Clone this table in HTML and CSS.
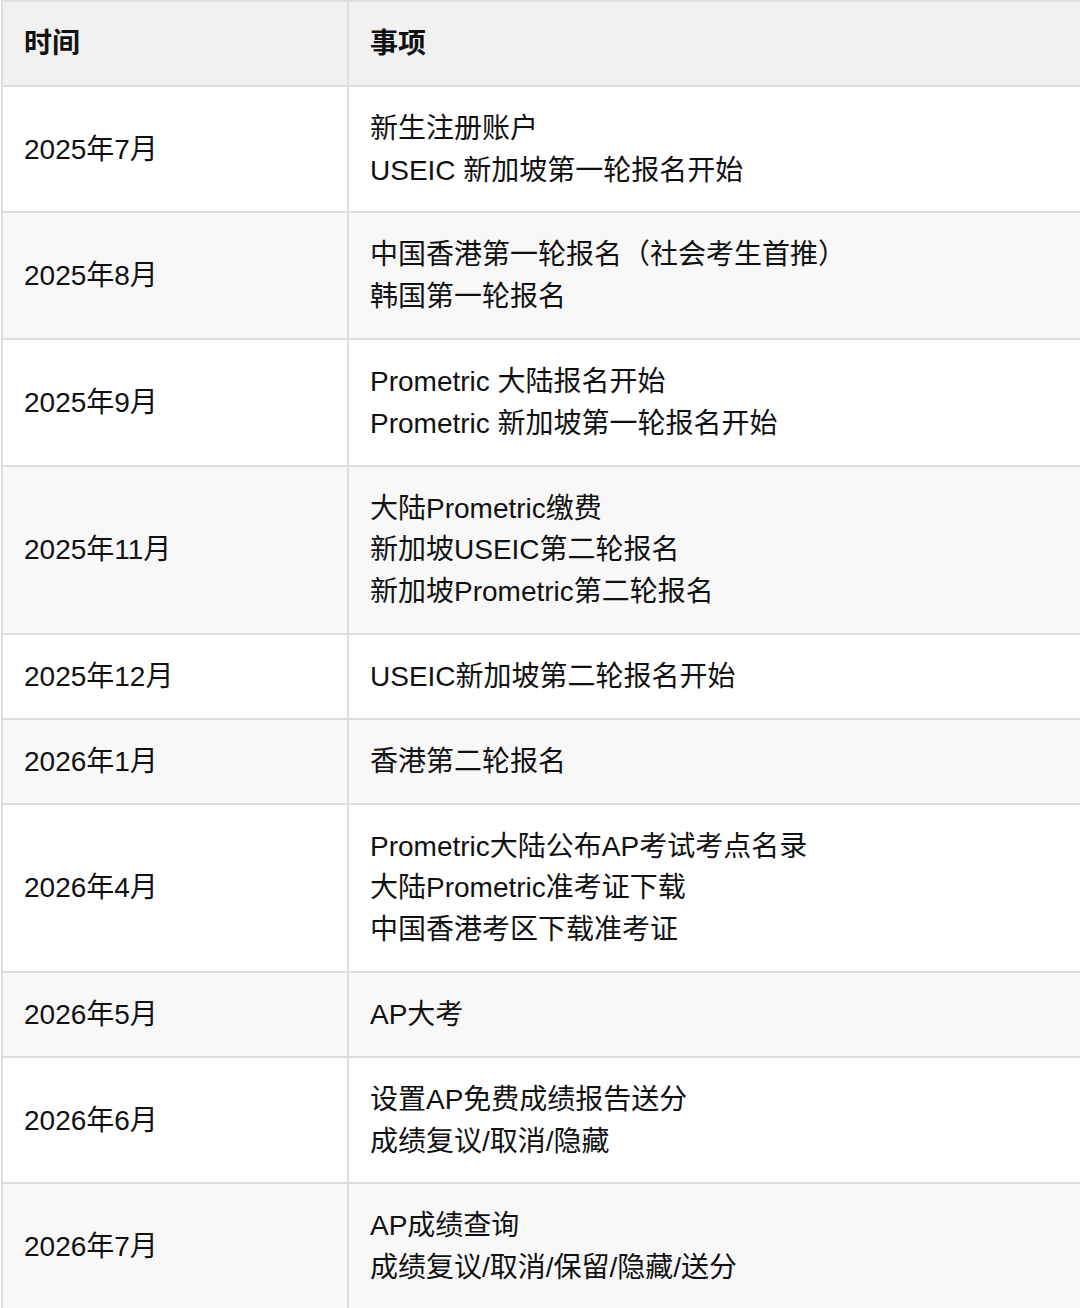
FILE: index.html
```html
<!DOCTYPE html>
<html lang="zh-CN">
<head>
<meta charset="utf-8">
<title>AP 时间表</title>
<link rel="stylesheet" href="styles.css">
</head>
<body>
<table class="schedule">
  <colgroup>
    <col class="col-time">
    <col class="col-item">
  </colgroup>
  <thead>
    <tr><th>时间</th><th>事项</th></tr>
  </thead>
  <tbody>
    <tr><td>2025年7月</td><td>新生注册账户<br>USEIC 新加坡第一轮报名开始</td></tr>
    <tr><td>2025年8月</td><td>中国香港第一轮报名（社会考生首推）<br>韩国第一轮报名</td></tr>
    <tr><td>2025年9月</td><td>Prometric 大陆报名开始<br>Prometric 新加坡第一轮报名开始</td></tr>
    <tr><td>2025年11月</td><td>大陆Prometric缴费<br>新加坡USEIC第二轮报名<br>新加坡Prometric第二轮报名</td></tr>
    <tr><td>2025年12月</td><td>USEIC新加坡第二轮报名开始</td></tr>
    <tr><td>2026年1月</td><td>香港第二轮报名</td></tr>
    <tr><td>2026年4月</td><td>Prometric大陆公布AP考试考点名录<br>大陆Prometric准考证下载<br>中国香港考区下载准考证</td></tr>
    <tr><td>2026年5月</td><td>AP大考</td></tr>
    <tr><td>2026年6月</td><td>设置AP免费成绩报告送分<br>成绩复议/取消/隐藏</td></tr>
    <tr><td>2026年7月</td><td>AP成绩查询<br>成绩复议/取消/保留/隐藏/送分</td></tr>
  </tbody>
</table>
</body>
</html>
```

FILE: styles.css
```css
html, body {
  margin: 0;
  padding: 0;
  background: #ffffff;
}

body {
  font-family: "Liberation Sans", Arial, "Noto Sans CJK SC", sans-serif;
  font-size: 28px;
  line-height: 41.8px;
  color: #111111;
  overflow: hidden;
}

.schedule {
  border-collapse: collapse;
  table-layout: fixed;
  width: 1100px;
  margin-left: 1px;
}

.col-time {
  width: 346px;
}

.schedule th,
.schedule td {
  border: 2px solid #dedede;
  padding: 21px 21px 20px;
  text-align: left;
  vertical-align: middle;
}

.schedule th {
  background: #f1f1f1;
  font-weight: bold;
}

.schedule tbody tr:nth-child(even) td {
  background: #f8f8f8;
}
```
